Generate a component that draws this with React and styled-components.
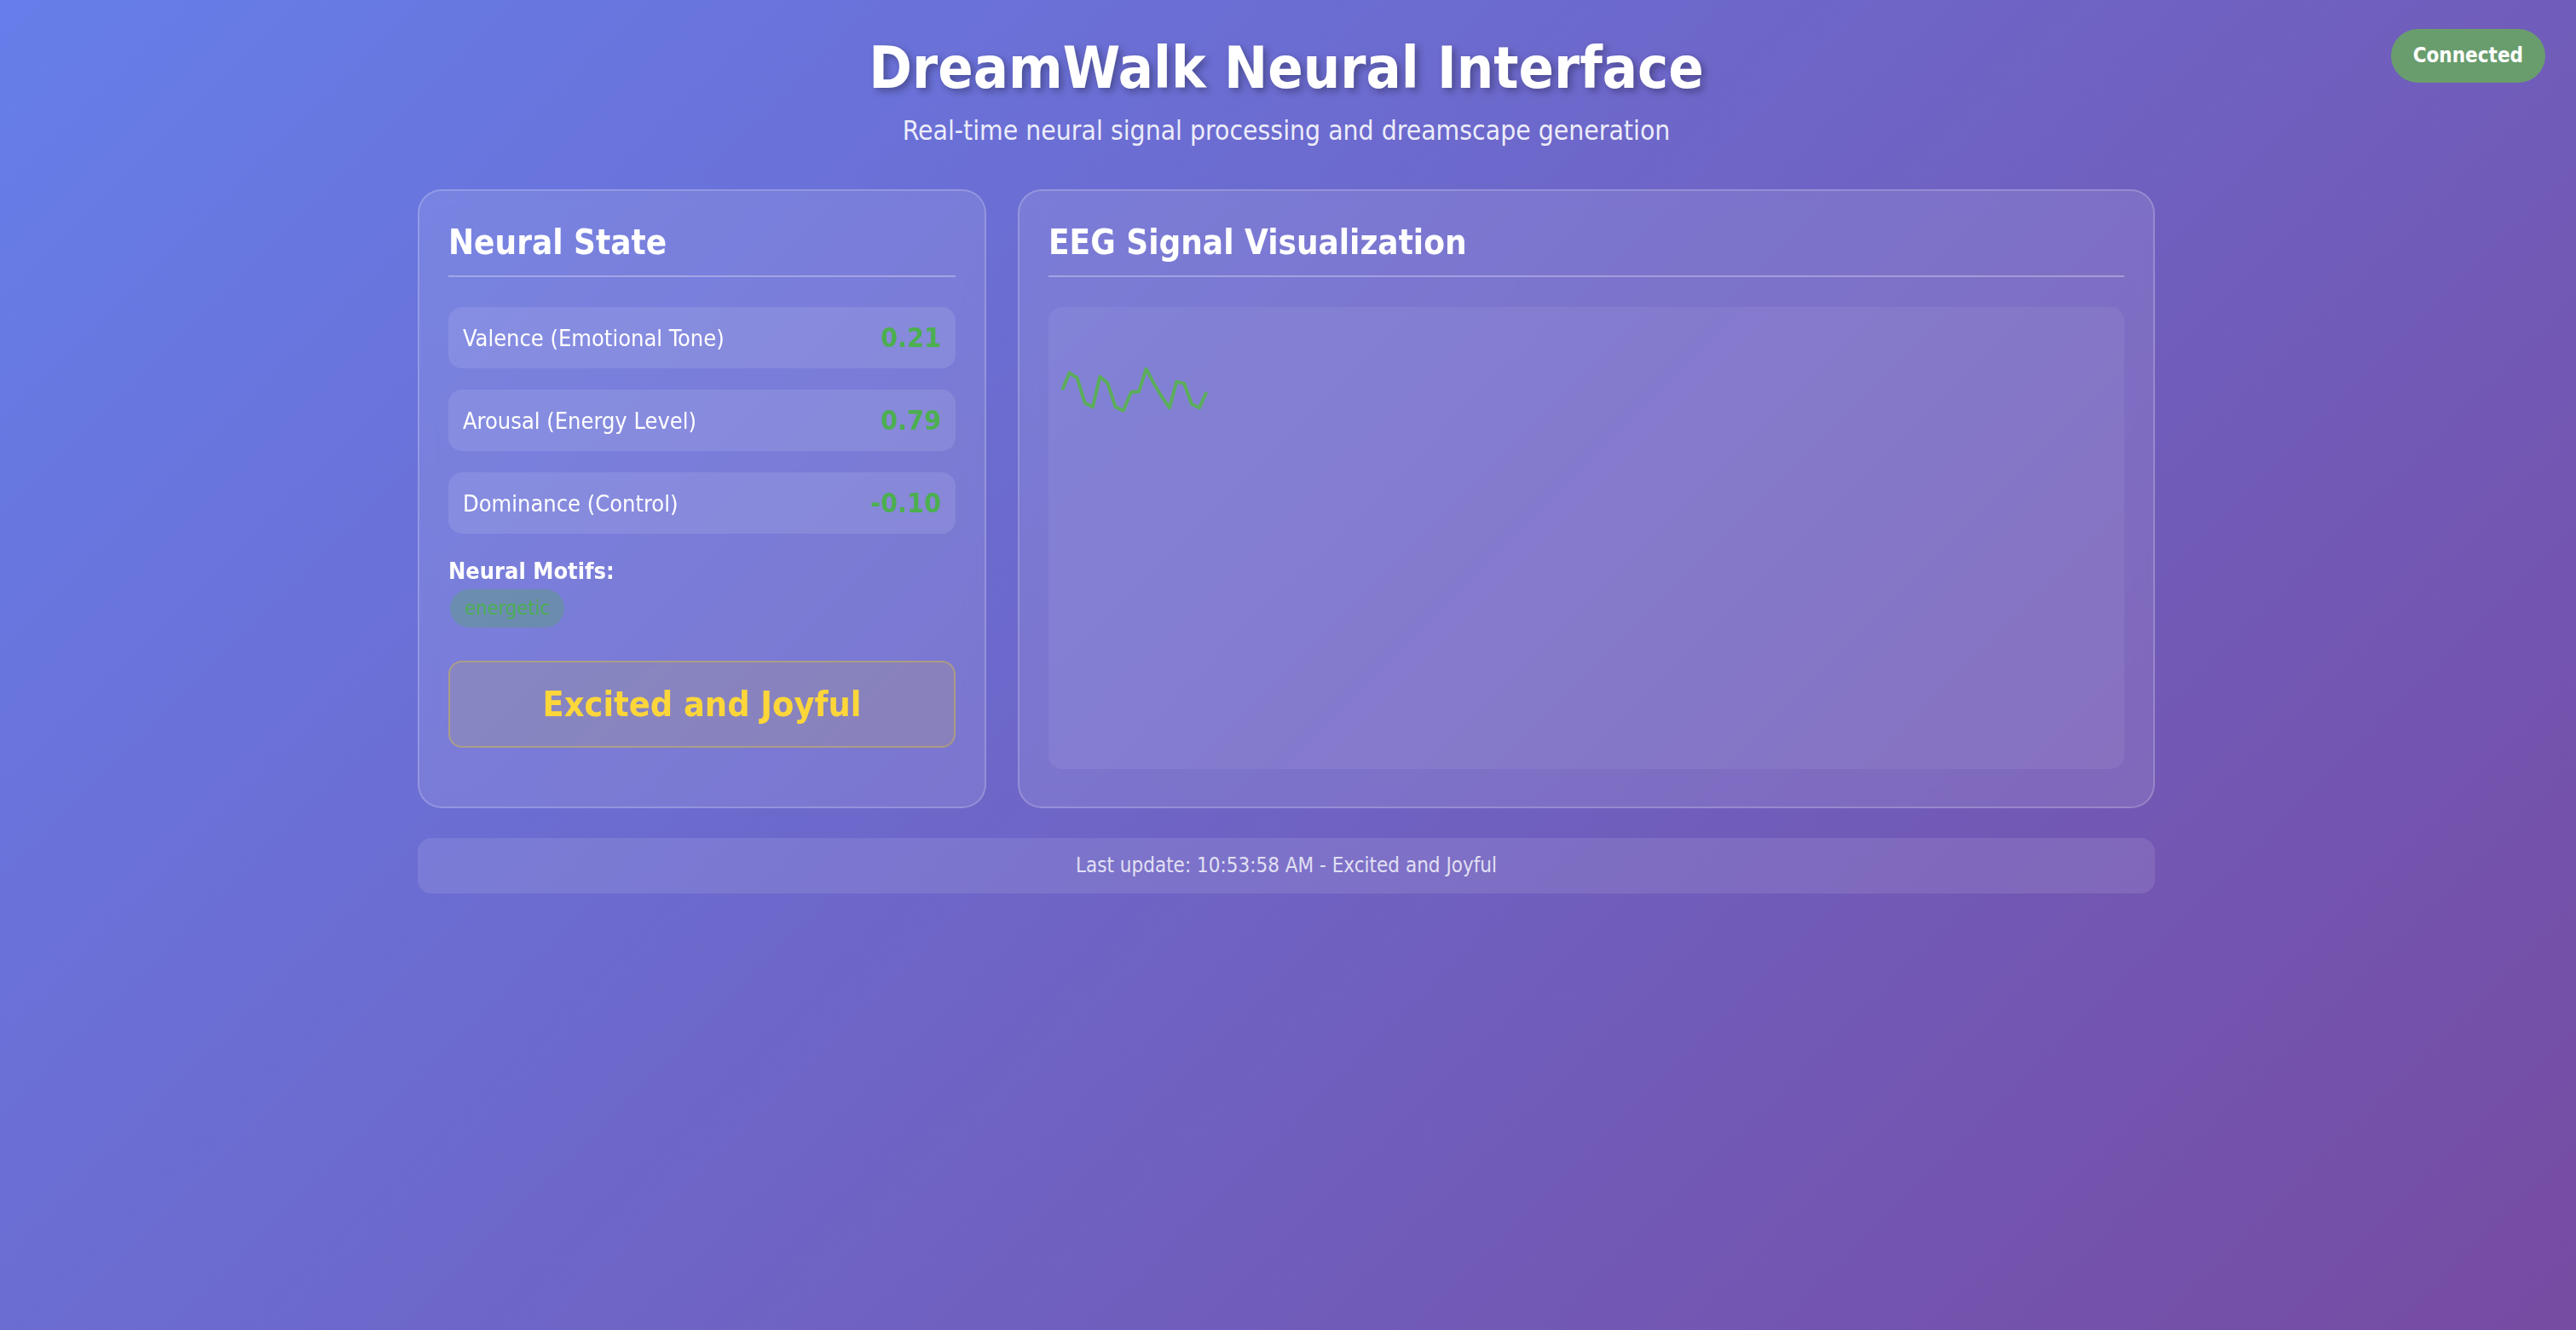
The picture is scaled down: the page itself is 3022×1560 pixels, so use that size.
import React from "react";
import styled, { createGlobalStyle } from "styled-components";

const GlobalStyle = createGlobalStyle`
  html, body {
    margin: 0;
    padding: 0;
  }
  body {
    font-family: "DejaVu Sans Condensed", "DejaVu Sans", sans-serif;
    color: #ffffff;
  }
  * { box-sizing: border-box; }
`;

const Page = styled.div`
  min-height: 100vh;
  background: linear-gradient(135deg, #667eea 0%, #764ba2 100%);
  padding: 40px 4px 40px 0;
  font-family: "DejaVu Sans Condensed", "DejaVu Sans", sans-serif;
`;

const StatusBadge = styled.div`
  position: fixed;
  top: 34px;
  right: 36px;
  padding: 17px 26px;
  border-radius: 999px;
  background: #699d6d;
  color: #ffffff;
  font-size: 24px;
  line-height: 29px;
  font-weight: 700;
`;

const Header = styled.header`
  text-align: center;
  margin-bottom: 50px;
`;

const Title = styled.h1`
  margin: 0 0 16px;
  font-size: 68px;
  line-height: 79px;
  font-weight: 700;
  color: #ffffff;
  text-shadow: 4px 4px 8px rgba(0, 0, 0, 0.3);
`;

const Subtitle = styled.p`
  margin: 0;
  font-size: 31.6px;
  line-height: 37px;
  color: rgba(255, 255, 255, 0.9);
`;

const Container = styled.main`
  width: 2038px;
  margin: 0 auto;
`;

const Grid = styled.div`
  display: grid;
  grid-template-columns: 1fr 2fr;
  gap: 37px;
  align-items: stretch;
`;

const Panel = styled.section`
  background: rgba(255, 255, 255, 0.1);
  border: 2px solid rgba(255, 255, 255, 0.2);
  border-radius: 28px;
  padding: 34px;
  backdrop-filter: blur(10px);
`;

const PanelTitle = styled.h2`
  margin: 0 0 35px;
  padding-bottom: 13px;
  border-bottom: 2px solid rgba(255, 255, 255, 0.3);
  font-size: 40px;
  line-height: 52px;
  font-weight: 700;
  color: #ffffff;
`;

const Metrics = styled.div`
  display: flex;
  flex-direction: column;
  gap: 25px;
`;

const MetricRow = styled.div`
  display: flex;
  align-items: center;
  justify-content: space-between;
  height: 72px;
  padding: 0 17px;
  border-radius: 16px;
  background: rgba(255, 255, 255, 0.1);
`;

const MetricLabel = styled.span`
  font-size: 27px;
  line-height: 33px;
  color: #ffffff;
`;

const MetricValue = styled.span`
  font-size: 32px;
  line-height: 37px;
  font-weight: 700;
  color: #4caf50;
`;

const MotifLabel = styled.div`
  margin-top: 27px;
  font-size: 27px;
  line-height: 33px;
  font-weight: 700;
  color: #ffffff;
`;

const MotifList = styled.div`
  display: flex;
  flex-wrap: wrap;
  gap: 8px;
  margin-top: 5px;
  padding-left: 2px;
`;

const MotifTag = styled.span`
  padding: 8px 17px;
  border-radius: 999px;
  background: rgba(76, 175, 80, 0.3);
  color: #4caf50;
  font-size: 23.5px;
  line-height: 29px;
`;

const MoodBox = styled.div`
  margin-top: 39px;
  padding: 25px;
  border: 2px solid rgba(255, 215, 0, 0.3);
  border-radius: 16px;
  background: rgba(255, 215, 0, 0.1);
  text-align: center;
  font-size: 41px;
  line-height: 48px;
  font-weight: 700;
  color: #fdd63a;
`;

const Chart = styled.div`
  height: 542px;
  margin-bottom: 10px;
  border-radius: 16px;
  background: rgba(255, 255, 255, 0.06);
  overflow: hidden;
`;

const Footer = styled.footer`
  margin-top: 35px;
  padding: 18px;
  border-radius: 16px;
  background: rgba(255, 255, 255, 0.1);
  text-align: center;
  font-size: 24px;
  line-height: 29px;
  color: rgba(255, 255, 255, 0.8);
`;

const metrics = [
  { label: "Valence (Emotional Tone)", value: "0.21" },
  { label: "Arousal (Energy Level)", value: "0.79" },
  { label: "Dominance (Control)", value: "-0.10" },
];

const wave = [
  [16.3, 97.3], [24.7, 77.3], [33.7, 83.3], [42.7, 112.7], [52, 117.3],
  [60.3, 81.7], [69.3, 89.3], [78.7, 117.3], [87.7, 121.7], [97, 100],
  [106, 99.3], [114.7, 72.7], [123.7, 90], [132.7, 105], [142, 118.3],
  [150.3, 87.7], [159.3, 90], [168, 114], [177, 118.3], [185.3, 100],
];

export default function App() {
  return (
    <Page>
      <GlobalStyle />
      <StatusBadge>Connected</StatusBadge>
      <Header>
        <Title>DreamWalk Neural Interface</Title>
        <Subtitle>Real-time neural signal processing and dreamscape generation</Subtitle>
      </Header>
      <Container>
        <Grid>
          <Panel>
            <PanelTitle>Neural State</PanelTitle>
            <Metrics>
              {metrics.map((m) => (
                <MetricRow key={m.label}>
                  <MetricLabel>{m.label}</MetricLabel>
                  <MetricValue>{m.value}</MetricValue>
                </MetricRow>
              ))}
            </Metrics>
            <MotifLabel>Neural Motifs:</MotifLabel>
            <MotifList>
              <MotifTag>energetic</MotifTag>
            </MotifList>
            <MoodBox>Excited and Joyful</MoodBox>
          </Panel>
          <Panel>
            <PanelTitle>EEG Signal Visualization</PanelTitle>
            <Chart>
              <svg width="100%" height="100%">
                <polyline
                  points={wave.map((p) => p.join(",")).join(" ")}
                  fill="none"
                  stroke="#5cad5c"
                  strokeWidth="4"
                  strokeLinejoin="round"
                />
              </svg>
            </Chart>
          </Panel>
        </Grid>
        <Footer>Last update: 10:53:58 AM - Excited and Joyful</Footer>
      </Container>
    </Page>
  );
}
